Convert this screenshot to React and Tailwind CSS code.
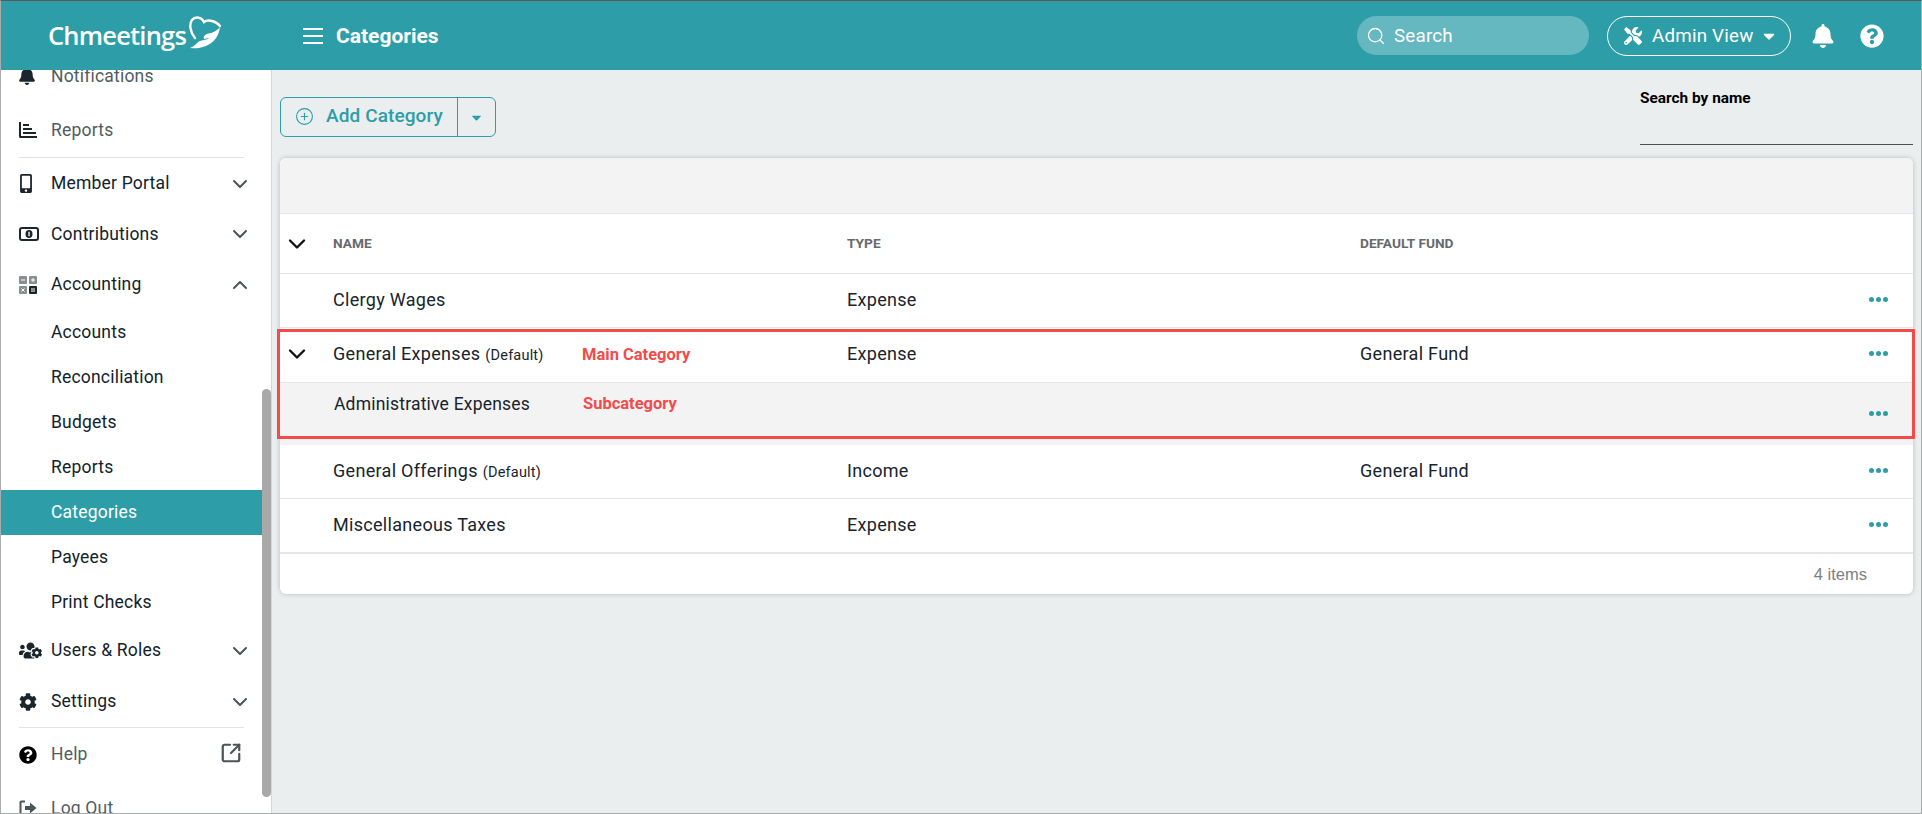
import React from "react";
import { Search, ChevronDown, ChevronUp, CirclePlus, SquareArrowOutUpRight } from "lucide-react";
import { FaBell, FaMobileAlt, FaUsersCog, FaCog, FaQuestionCircle, FaTools, FaCaretDown } from "react-icons/fa";

const ReportsIcon = () => (
  <svg viewBox="0 0 18 16" className="w-[18px] h-[16px]" fill="currentColor">
    <path d="M0 0h2v14h16v2H1.500A1.500 1.500 0 0 1 0 14.500z" />
    <rect x="4" y="2" width="6" height="2" />
    <rect x="4" y="6" width="9" height="2" />
    <rect x="4" y="10" width="13" height="2" />
  </svg>
);

const CalcIcon = () => (
  <svg viewBox="0 0 18 18" className="w-[18px] h-[18px]">
    <rect x="0" y="0" width="8" height="8" rx="1" fill="#8a8f92" />
    <rect x="10" y="0" width="8" height="8" rx="1" fill="#8a8f92" />
    <rect x="0" y="10" width="8" height="8" rx="1" fill="#8a8f92" />
    <rect x="10" y="10" width="8" height="8" rx="1" fill="#1c2529" />
    <path d="M2 4h4M12 4h4M14 2v4M2.500 12.500l3 3M5.500 12.500l-3 3M12 13h4M12 15h4" stroke="#fff" strokeWidth="1" fill="none" />
  </svg>
);

const BillIcon = () => (
  <svg viewBox="0 0 20 14" className="w-[20px] h-[14px]">
    <rect x="1" y="1" width="18" height="12" rx="2" fill="none" stroke="#1a262c" strokeWidth="2" />
    <ellipse cx="10" cy="7" rx="3.500" ry="4" fill="#1a262c" />
    <rect x="9.400" y="4.800" width="1.300" height="4.400" fill="#fff" />
  </svg>
);

const LogOutIcon = () => (
  <svg viewBox="0 0 18 16" className="w-[18px] h-[16px]" fill="none">
    <path d="M6 1.500H2.500A1 1 0 0 0 1.500 2.500v11a1 1 0 0 0 1 1H6" stroke="#4a5459" strokeWidth="2" />
    <path d="M6 6h5V2.500L17.500 8 11 13.500V10H6z" fill="#4a5459" />
  </svg>
);

const Logo = () => (
  <svg viewBox="0 0 32 34" className="w-[32px] h-[34px] ml-[3px] -mt-[6px]" fill="none">
    <path d="M6 22C1 16 0 8 3 4C6 0 13 1 15 6C19 3 27 5 31 10" stroke="#fff" strokeWidth="2.400" strokeLinecap="round" />
    <path d="M1 32C5 32 8 33 14 31C22 29 30 22 31 11C27 16 22 17 18 18C15 19 14 21 15 23L20 22C17 25 12 23 8 27C6 29 4 31 1 32Z" fill="#fff" />
  </svg>
);

const MainItem = ({ icon, label, h, open, muted }) => (
  <div className={`flex items-center pl-[18px] pr-[10px] ${h} ${muted ? "text-[#515c62]" : "text-[#12222c]"}`}>
    <span className="w-[32px] flex items-center text-[#1a262c]">{icon}</span>
    <span className="flex-1">{label}</span>
    {open === true && <ChevronUp className="w-[24px] h-[24px] text-[#4a5459]" strokeWidth={2} />}
    {open === false && <ChevronDown className="w-[24px] h-[24px] text-[#4a5459]" strokeWidth={2} />}
  </div>
);

const SubItem = ({ label, active }) => (
  <div className={`flex items-center h-[45px] pl-[50px] ${active ? "bg-[#2d9da8] text-white" : "text-[#12222c]"}`}>{label}</div>
);

const Dots = () => (
  <div className="flex gap-[2px]">
    <div className="w-[5px] h-[5px] rounded-full bg-[#2d9da8]" />
    <div className="w-[5px] h-[5px] rounded-full bg-[#2d9da8]" />
    <div className="w-[5px] h-[5px] rounded-full bg-[#2d9da8]" />
  </div>
);

const Row = ({ name, note, type, fund, chevron, h = "h-[54px] pb-[2px]" }) => (
  <div className={`flex items-center ${h} border-b border-[#e3e5e6] text-[#17242c]`}>
    <div className="w-[53px] pl-[3px] flex">
      {chevron && <ChevronDown className="w-[28px] h-[28px] text-[#111]" strokeWidth={2} />}
    </div>
    <div className="w-[514px] flex items-baseline">
      <span>{name}</span>
      {note && <span className="ml-[5px] text-[14.5px] tracking-[0.2px]">{note}</span>}
    </div>
    <div className="w-[513px]">{type}</div>
    <div className="flex-1">{fund}</div>
    <div className="pr-[25px]"><Dots /></div>
  </div>
);

export default function App() {
  return (
    <div className="w-[1922px] h-[814px] overflow-hidden flex flex-col border border-[#a9adae] border-t-[#55595a] bg-[#ebeeef] font-['Roboto',sans-serif] text-[17.5px] tracking-[0.2px]">
      <header className="h-[69px] shrink-0 bg-[#2d9da8] flex items-center text-white relative z-10">
        <div className="w-[302px] pl-[47px] flex items-center">
          <span className="font-['Open_Sans',sans-serif] font-semibold text-[25.500px] tracking-[-0.8px] leading-none">Chmeetings</span>
          <Logo />
        </div>
        <div className="flex flex-col gap-[5px] w-[20px]">
          <div className="h-[2px] bg-white" />
          <div className="h-[2px] bg-white" />
          <div className="h-[2px] bg-white" />
        </div>
        <h1 className="ml-[13px] pt-[2px] text-[21px] font-bold tracking-normal">Categories</h1>
        <div className="ml-auto flex items-center mr-[37px]">
          <div className="w-[232px] h-[39px] rounded-full bg-[#65b8bf] flex items-center pl-[9px] gap-[8px] text-[18.800px]">
            <Search className="w-[20px] h-[20px]" strokeWidth={1.600} />
            <span className="pt-[1px]">Search</span>
          </div>
          <div className="ml-[18px] w-[184px] h-[40px] rounded-full border border-white flex items-center pl-[16px] text-[18.800px]">
            <FaTools className="w-[18px] h-[18px]" />
            <span className="ml-[10px] pt-[2px]">Admin View</span>
            <FaCaretDown className="ml-[6px] w-[18px] h-[18px]" />
          </div>
          <FaBell className="ml-[21px] w-[22px] h-[24px]" />
          <FaQuestionCircle className="ml-[26px] w-[24px] h-[24px]" />
        </div>
      </header>

      <div className="flex flex-1 min-h-0">
        <aside className="w-[271px] shrink-0 bg-white border-r border-[#d5d8d9] flex overflow-hidden">
          <nav className="w-[261px] shrink-0 -mt-[21px]">
            <MainItem muted h="h-[54px]" label="Notifications" icon={<FaBell className="w-[16px] h-[18px]" />} />
            <MainItem muted h="h-[54px]" label="Reports" icon={<ReportsIcon />} />
            <div className="mx-[18px] border-t border-[#e0e2e3]" />
            <MainItem h="h-[51px]" label="Member Portal" open={false} icon={<FaMobileAlt className="w-[18px] h-[19px] -ml-[2px]" />} />
            <MainItem h="h-[50px]" label="Contributions" open={false} icon={<BillIcon />} />
            <MainItem h="h-[51px]" label="Accounting" open={true} icon={<CalcIcon />} />
            <SubItem label="Accounts" />
            <SubItem label="Reconciliation" />
            <SubItem label="Budgets" />
            <SubItem label="Reports" />
            <SubItem label="Categories" active />
            <SubItem label="Payees" />
            <SubItem label="Print Checks" />
            <MainItem h="h-[51px]" label="Users & Roles" open={false} icon={<FaUsersCog className="w-[23px] h-[19px]" />} />
            <MainItem h="h-[51px]" label="Settings" open={false} icon={<FaCog className="w-[18px] h-[18px]" />} />
            <div className="mx-[18px] border-t border-[#e0e2e3]" />
            <div className="relative">
              <MainItem muted h="h-[53px]" label="Help" icon={<FaQuestionCircle className="w-[18px] h-[18px] text-black" />} />
              <SquareArrowOutUpRight className="absolute right-[20px] top-[14px] w-[22px] h-[22px] text-[#4a5459]" strokeWidth={2.400} />
            </div>
            <MainItem muted h="h-[54px]" label="Log Out" icon={<LogOutIcon />} />
          </nav>
          <div className="flex-1 pt-[319px]">
            <div className="h-[408px] bg-[#a9a9a9] rounded-[5px]" />
          </div>
        </aside>

        <main className="flex-1 min-w-0 pl-[8px] pr-[8px] pt-[18px]">
          <div className="h-[57px] flex justify-between items-start">
            <div className="mt-[9px] h-[40px] flex border border-[#2d9da8] rounded-[6px] text-[#2d9da8]">
              <div className="w-[177px] flex items-center pl-[14px] pb-[1px] border-r border-[#2d9da8]">
                <CirclePlus className="w-[19px] h-[19px]" strokeWidth={1.400} />
                <span className="ml-[12px] text-[19px] font-medium tracking-[0.1px]">Add Category</span>
              </div>
              <div className="w-[37px] flex items-center justify-center">
                <FaCaretDown className="w-[15px] h-[15px]" />
              </div>
            </div>
            <div className="w-[273px] h-[57px] pt-[1px] border-b border-[#4a5053]">
              <div className="text-[15.400px] font-bold text-black leading-[19px] tracking-normal">Search by name</div>
            </div>
          </div>

          <section className="relative mt-[13px] bg-white rounded-[6px] shadow-[0_0_5px_rgba(0,0,0,0.22)]">
            <div className="h-[56px] bg-[#f3f3f3] rounded-t-[6px] border-b border-[#e3e5e6]" />
            <div className="flex items-center h-[60px] border-b border-[#e3e5e6] text-[13.700px] font-bold text-[#666a6d] tracking-normal">
              <div className="w-[53px] pl-[3px]">
                <ChevronDown className="w-[28px] h-[28px] text-[#111]" strokeWidth={2} />
              </div>
              <div className="w-[514px]">NAME</div>
              <div className="w-[513px]">TYPE</div>
              <div>DEFAULT FUND</div>
            </div>
            <div className="text-[18px] tracking-[0.3px]">
              <Row name="Clergy Wages" type="Expense" />
              <Row name="General Expenses" note="(Default)" type="Expense" fund="General Fund" chevron h="h-[55px] pb-[3px]" />
              <div className="relative h-[62px] pb-[2px] bg-[#f3f3f3] flex items-center justify-end pr-[25px] text-[#17242c]">
                <span className="absolute left-[54px] top-[8px] text-[17.500px] tracking-[0.2px]">Administrative Expenses</span>
                <Dots />
              </div>
              <Row name="General Offerings" note="(Default)" type="Income" fund="General Fund" />
              <Row name="Miscellaneous Taxes" type="Expense" />
            </div>
            <div className="h-[41px] border-t border-[#e3e5e6] flex items-center justify-end pr-[46px] text-[16.500px] text-[#7b7f82] font-['Liberation_Sans',sans-serif] tracking-normal">
              4 items
            </div>

            {/* annotations drawn on top of the table */}
            <div className="absolute -left-[3px] -right-[2px] top-[171px] h-[110px] border-[3px] border-[#f44a4a]" />
            <span className="absolute left-[302px] top-[185px] text-[16.500px] font-bold text-[#f44a4a] tracking-normal">Main Category</span>
            <span className="absolute left-[303px] top-[234px] text-[16.500px] font-bold text-[#f44a4a] tracking-normal">Subcategory</span>
          </section>
        </main>
      </div>
    </div>
  );
}
